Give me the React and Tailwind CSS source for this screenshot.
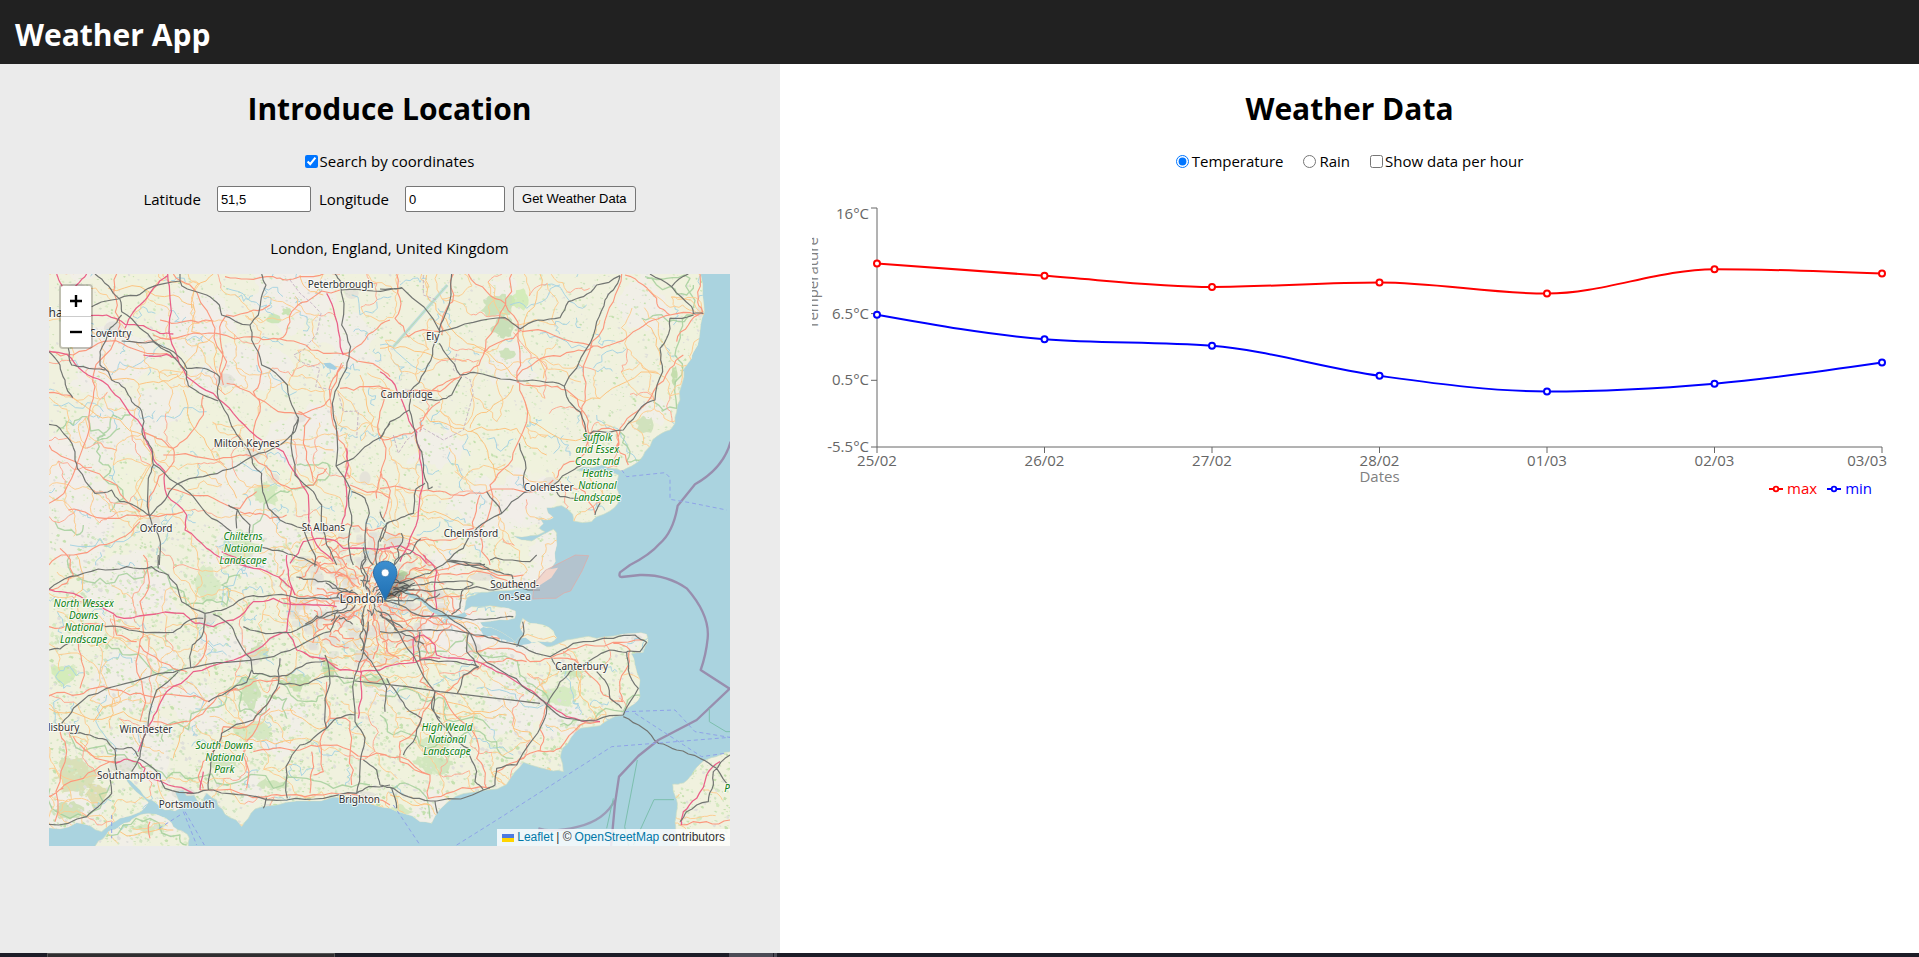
import { useEffect, useMemo, useRef, useState } from "react";

/* ------------------------------------------------------------------ */
/* Map geometry. Four sheets, each with its own local coordinates.     */
/* ------------------------------------------------------------------ */

const SHEETS = { nw: [0, 0], ne: [1020, 0], sw: [0, 870], se: [1020, 870] };

function createRandom(seed) {
  let s = seed;
  return () => {
    s = (s * 1664525 + 1013904223) % 4294967296;
    return s / 4294967296;
  };
}

function parse(sheet, text) {
  const [ox, oy] = SHEETS[sheet];
  return text.split(" ").map((pair) => {
    const [x, y] = pair.split(",").map(Number);
    return [x + ox, y + oy];
  });
}

/* Subdivides a line and shifts the middle points so that it meanders. */
function roughen(points, amount, rand, depth = 2) {
  let out = points;
  for (let d = 0; d < depth; d++) {
    const next = [out[0]];
    for (let i = 1; i < out.length; i++) {
      const [x0, y0] = out[i - 1];
      const [x1, y1] = out[i];
      const len = Math.hypot(x1 - x0, y1 - y0);
      const k = (rand() - 0.5) * amount;
      if (len > 14) next.push([(x0 + x1) / 2 - (y1 - y0) * k, (y0 + y1) / 2 + (x1 - x0) * k]);
      next.push([x1, y1]);
    }
    out = next;
  }
  return out;
}

const toPath = (pts) => "M" + pts.map((p) => p[0].toFixed(0) + " " + p[1].toFixed(0)).join("L");

const ENGLAND = [
  ["nw", "-400,-400"],
  ["ne", "960,-400 960,0 962,27 968,90 974,140 962,180 958,215 940,262 935,280 912,312 905,360 900,405 890,440 885,475 870,495 845,505 818,524 795,560 780,585 755,603 725,618 712,612 665,600 610,606 590,616 640,622 690,618 716,630 706,655 718,690 714,715 690,738 650,755 635,770 580,768 578,748 545,722 520,728 500,728 505,745 520,758 500,765 478,760 490,776 478,790 495,800 450,812 400,812 425,825 455,828 490,808 520,793 530,805 530,840 526,890"],
  ["se", "526,20 500,50 480,78 455,102 395,106 340,108 305,112 285,120 262,128 256,150 252,172 215,182 175,168 150,150 130,128 95,118 50,92 90,128 125,140 150,168 180,185 215,196 245,196 262,182 252,170 275,155 330,152 385,160 406,168 404,190 360,194 300,202 310,215 350,225 385,245 405,262 420,245 432,238 420,215 428,190 450,205 490,210 520,228 530,248 515,262 470,258 500,275 520,272 560,255 600,248 650,250 700,243 765,235 800,238 803,262 790,292 755,296 765,330 780,375 780,425 765,445 735,465 725,482 690,492 660,512 600,520 575,545 548,580 541,605 550,650 520,648 480,638 430,622 405,650 380,688 320,705 250,716 205,740 178,765 155,805 120,800 70,775 30,760 0,755"],
  ["sw", "1010,752 960,738 880,727 800,738 740,742 690,752 645,762 625,790 605,815 588,795 555,778 534,752 530,735 500,715 488,745 472,738 462,720 440,722 430,705 405,712 420,745 440,755 405,768 375,765 350,745 322,732 300,705 275,680 250,655 262,680 290,712 325,742 302,770 240,790 215,805 185,830 150,812 110,803 60,822 0,815 -400,815"],
].flatMap(([s, t]) => parse(s, t));

const WIGHT = parse("sw", "165,873 190,850 205,830 240,812 270,800 300,780 325,776 365,785 400,815 430,830 448,850 440,900 200,900");
const FRANCE = parse("se", "1080,590 1035,592 1020,600 970,618 935,660 910,684 878,688 884,720 892,745 885,800 892,850 905,910 1080,910");
const SHEPPEY_WATER = parse("se", "300,222 340,210 385,205 390,225 345,232 395,240 410,228 424,250 470,262 440,268 400,262 350,242 310,240");

const RAIL = [
  ["nw", "165,27 205,62 240,103 245,140 300,190 340,228 400,260 440,310 500,312 538,335 535,400 570,470 600,520 632,570 640,600 665,625 668,680 685,730 720,765 790,790 825,870 825,905"],
  ["nw", "155,125 215,105 290,92 325,70 420,48 425,62 500,90 538,120 545,150 630,180 635,225 665,300 742,360 750,405 775,460 755,510 765,630 820,680 845,720 860,840 890,900"],
  ["nw", "420,27 420,48"],
  ["nw", "665,27 678,60 662,110 655,150 630,180"],
  ["nw", "885,27 902,50 905,180 932,245 920,310 885,380 880,450 890,500 888,603 930,670 935,780 925,830 940,900"],
  ["nw", "888,603 940,580 975,545 1025,515 1050,475"],
  ["nw", "905,75 1000,78 1085,70"],
  ["nw", "245,150 210,190 180,260 180,300 205,320 215,345 255,370 275,410 300,430 312,470 308,510 335,550 340,600 325,640 328,750 355,810 358,900"],
  ["nw", "27,260 60,300 75,345 80,370 98,398"],
  ["nw", "85,250 95,300 130,305 195,315"],
  ["nw", "27,478 50,482 80,515 105,560 112,610 165,685 215,675 240,710 290,725 330,752"],
  ["nw", "330,752 375,705 410,658 490,635 570,612 635,575 720,540 765,500 775,455"],
  ["nw", "340,598 410,655 460,695 515,760 575,800"],
  ["nw", "245,228 340,230 390,262 440,320 445,362 490,390 535,408"],
  ["nw", "565,720 592,735 590,790"],
  ["nw", "592,733 630,780 632,830"],
  ["nw", "665,847 730,860 790,880 830,900"],
  ["nw", "935,680 975,700 988,745 975,810 985,880 1000,900"],
  ["nw", "1050,770 1030,790 1015,830 1010,900"],
  ["ne", "0,72 65,68 180,200 280,172 375,158 420,192 475,165 540,158 565,110 610,95 650,60 720,32"],
  ["ne", "215,27 195,150 178,205 158,250 135,320 90,380 88,435 105,500 125,560 135,640 145,672 158,665"],
  ["ne", "88,435 30,470 0,520"],
  ["ne", "178,235 200,270 240,330 280,322 390,343 480,348 553,364 560,395 600,440 615,480 618,515"],
  ["ne", "245,335 215,390 180,405 130,402"],
  ["ne", "553,364 620,250 650,170 675,105 700,75 720,32"],
  ["ne", "810,27 875,65 935,125 940,145 970,145"],
  ["ne", "925,27 875,65"],
  ["ne", "940,150 870,160 860,220 840,250 848,320 825,405 785,425 730,495 640,498 615,520"],
  ["ne", "605,600 580,615 520,660 432,683 365,745 290,790 265,820 250,850 200,890"],
  ["ne", "418,535 438,610 430,670"],
  ["ne", "320,680 365,745"],
  ["ne", "530,680 540,695 600,700"],
  ["ne", "660,715 645,750"],
  ["ne", "135,655 108,672 100,745 50,765 20,775 15,800 0,830"],
  ["ne", "0,740 15,770"],
  ["ne", "200,888 315,898"],
  ["sw", "27,103 90,65 175,42 260,35 335,35 385,60 410,90 425,140 495,175 560,160 640,122 700,120 800,130 895,128"],
  ["sw", "355,0 355,40"],
  ["sw", "27,285 60,282 90,262"],
  ["sw", "195,215 290,228 400,232 440,200 490,190"],
  ["sw", "495,175 485,245 457,270 452,340"],
  ["sw", "520,178 575,215 590,250 632,310 640,355 690,365 740,362 800,325 855,318"],
  ["sw", "610,215 700,235 770,225 830,190 895,165"],
  ["sw", "65,505 100,460 200,400 310,370 400,352 440,340 560,322 700,305 800,260 870,230 900,180"],
  ["sw", "415,350 350,405 325,500 310,550 300,605 275,650"],
  ["sw", "90,535 150,540 200,555 225,585 230,645"],
  ["sw", "295,610 350,650 375,700 460,715 520,705 620,720 740,735 850,730 950,715 985,695 1050,690"],
  ["sw", "225,580 275,578 295,605"],
  ["sw", "205,640 215,715 175,755 140,785 27,808"],
  ["sw", "505,440 560,412 620,382 635,345"],
  ["sw", "720,310 715,385 680,450 640,495 545,535 520,590 512,640 505,705"],
  ["sw", "715,385 780,392 830,372 940,370"],
  ["sw", "855,300 870,385 855,430 860,520 810,560 780,570 738,635 742,730"],
  ["sw", "860,520 890,490 945,480"],
  ["sw", "985,200 970,290 945,360 945,500 975,550 960,640 950,715"],
  ["sw", "970,290 1000,330 1040,400 1035,470"],
  ["sw", "970,615 1010,645 1020,690"],
  ["sw", "670,760 680,728"],
  ["se", "45,100 110,120 160,160 210,190 270,235 290,290 360,345 450,410 500,450 560,490 650,495 730,480 775,400 745,345 740,292 690,285 640,310 570,350 540,380 500,450"],
  ["se", "0,230 110,228 190,225 280,240 340,250 430,275 510,305 580,265 700,250 765,240 800,262 780,290 740,290"],
  ["se", "0,140 60,150 130,185 280,195 350,190 400,185"],
  ["se", "40,105 110,90 200,80 280,85"],
  ["se", "0,100 90,75 150,55 200,20 300,25 330,45"],
  ["se", "40,98 100,105 200,100 290,95 340,105 480,105"],
  ["se", "330,15 345,8 450,20 470,0"],
  ["se", "200,15 300,40 350,50 395,60 400,90"],
  ["se", "280,88 245,110 240,160 215,178"],
  ["se", "0,180 60,240 110,320 165,410 155,460 180,490"],
  ["se", "265,235 260,290 295,340"],
  ["se", "120,230 120,315 230,320 295,335 250,360 232,415"],
  ["se", "650,350 680,385 690,430 725,460"],
  ["se", "500,450 490,500 410,630 350,640 345,690 310,705 170,738 100,730 40,700 0,690"],
  ["se", "165,410 160,460 180,500 215,545 265,580 290,650 285,680 310,705"],
  ["se", "20,370 60,430 100,475 125,490 100,560 70,600"],
  ["se", "35,700 50,760"],
  ["se", "730,485 790,520 835,565 890,585 960,610 1010,640 1050,700"],
  ["se", "1050,600 1000,650 1000,690 985,740 920,770 900,800"],
  ["se", "165,738 172,775"],
  ["se", "515,310 545,350"],
  ["se", "410,275 430,240 428,200"],
];

/* The line between Redhill and Ashford runs almost dead straight. */
const STRAIGHT_RAIL = toPath(parse("sw", "945,378 1100,395 1200,410 1350,428 1500,445"));

const MOTORWAY = [
  ["nw", "50,27 65,60 90,95"],
  ["nw", "140,27 110,60 80,110"],
  ["nw", "385,30 340,70 300,120 265,165 255,190"],
  ["nw", "150,152 200,150 255,178 310,182 360,205 400,207"],
  ["nw", "383,27 390,100 388,180 405,255 440,335 520,385 580,445 650,515 730,560 770,630 805,690 808,780 830,840 880,890"],
  ["nw", "27,258 80,268 130,320 190,350 240,400 310,490 335,560 345,590 375,620 380,690 440,750 435,795 500,850 545,880 620,905"],
  ["nw", "860,85 880,130 900,220 910,270"],
  ["nw", "310,270 380,268 410,280"],
  ["nw", "920,550 925,600 915,650 920,720 905,780"],
  ["nw", "750,895 790,830 830,820 880,825 910,850 1050,850"],
  ["ne", "0,320 45,360 75,430 110,500 120,560 128,640 115,740 90,820 60,890"],
  ["ne", "0,852 60,842 95,858 140,895"],
  ["sw", "27,103 100,115 180,150 230,185 320,180 430,175 465,205 520,215 580,195 640,140 700,130 820,150 890,155"],
  ["sw", "545,-10 620,35 700,60 755,100 750,160 740,230 770,285 810,305 855,310 900,345 960,350 1020,345 1100,325 1200,310"],
  ["sw", "740,230 690,250 640,290 560,320 460,350 380,410 350,470 320,520 295,590"],
  ["sw", "225,625 260,612 300,625 315,640 310,665 385,690 460,715 440,715"],
  ["sw", "480,705 490,650"],
  ["sw", "740,0 745,60 765,120"],
  ["sw", "965,350 965,430 955,490"],
  ["se", "130,0 170,50 165,110 170,160 150,190"],
  ["se", "100,250 130,240 165,270 170,300 240,310 290,320 350,350 440,400 500,445 560,485 660,500"],
  ["se", "100,320 100,250"],
  ["se", "1020,620 980,660 950,730 910,770 905,810"],
];

const A_ROAD = [
  ["nw", "230,27 228,100 240,180 225,225 160,330 160,400 140,520 95,640 27,715"],
  ["nw", "27,260 100,270 175,235 245,235 320,265 400,275"],
  ["nw", "27,383 80,390 100,400"],
  ["nw", "400,27 450,60 515,165 525,190 560,290 550,360"],
  ["nw", "360,165 430,170 520,168"],
  ["nw", "340,210 440,210 530,205 640,215 700,220 780,235 850,265 930,275 1020,310 1050,335"],
  ["nw", "555,35 620,42 700,35 740,45 820,35 900,27"],
  ["nw", "690,120 640,135 560,150 540,200 545,290 540,345"],
  ["nw", "900,75 800,110 755,140 740,200 710,225"],
  ["nw", "560,355 600,370 700,430 770,445 830,430 870,400 880,340 905,295"],
  ["nw", "490,390 490,450 440,520 400,550 395,600 340,680 325,750"],
  ["nw", "27,540 80,580 160,620 230,660 300,740"],
  ["nw", "85,735 150,750 240,760 330,750 430,740"],
  ["nw", "27,900 80,870 160,850 240,820 300,770"],
  ["nw", "380,670 450,690 520,700 600,730 650,680"],
  ["nw", "310,500 350,520 400,550"],
  ["nw", "370,570 500,580 600,570 640,575 700,640 750,670 820,660 860,610"],
  ["nw", "660,240 665,320 640,380 660,440 640,560"],
  ["nw", "900,370 980,365 1050,372"],
  ["nw", "775,440 810,460 800,560 820,650"],
  ["nw", "910,300 870,400 880,480 920,560 930,640"],
  ["nw", "600,740 660,745 690,760 740,750"],
  ["nw", "930,660 1000,680 1050,700"],
  ["nw", "1050,165 1000,200 950,245 905,265"],
  ["nw", "1025,370 1020,440 1025,520 1020,640 1010,700"],
  ["ne", "50,27 60,100 45,160 85,215 180,200"],
  ["ne", "220,27 218,110 190,150 185,210"],
  ["ne", "265,27 320,80 375,115 415,195 420,260 410,340 435,410 415,530 385,600 330,660 300,790"],
  ["ne", "395,27 395,80 370,130 345,185 310,270 270,320 200,350 150,380 90,380"],
  ["ne", "425,195 400,220 310,265"],
  ["ne", "425,200 520,210 640,243 690,240 760,200 820,165 870,150 950,150 970,145"],
  ["ne", "725,27 700,110 670,190 620,280 615,380 605,440 625,510"],
  ["ne", "410,345 440,310 500,275 580,260 640,243"],
  ["ne", "410,350 500,360 560,375 610,440 625,500 620,560 550,600 530,640"],
  ["ne", "735,30 790,60 830,100 840,130 870,150"],
  ["ne", "960,27 955,100 968,140 925,180 890,230"],
  ["ne", "910,270 870,310 820,380 770,440 720,490 710,545"],
  ["ne", "620,505 680,490 710,500 712,550 745,600"],
  ["ne", "0,670 90,675 160,680 230,690 310,685 430,680 520,645"],
  ["ne", "580,670 615,680 645,745"],
  ["ne", "130,480 50,515 0,520"],
  ["ne", "120,500 135,450 180,410"],
  ["ne", "80,380 130,375 180,380 240,335"],
  ["ne", "100,820 180,825 240,810 280,790 290,720 300,690"],
  ["ne", "290,800 305,860 330,900"],
  ["ne", "0,620 20,650 10,760"],
  ["sw", "27,105 80,85 100,60 60,-20"],
  ["sw", "310,0 325,60 300,140 310,230 300,260 305,380 300,500"],
  ["sw", "27,422 120,418 160,400 270,420 310,420 450,425 510,440"],
  ["sw", "220,180 230,240 290,260"],
  ["sw", "27,215 100,215 200,215 300,220"],
  ["sw", "120,245 125,320 120,400"],
  ["sw", "300,270 360,320 415,345 440,350"],
  ["sw", "495,190 500,260 460,340"],
  ["sw", "560,420 610,400 640,380 720,375"],
  ["sw", "340,500 430,500 500,460 590,400"],
  ["sw", "60,505 75,560 60,680 45,800"],
  ["sw", "60,705 130,670 200,625 240,620"],
  ["sw", "100,545 150,595 230,625"],
  ["sw", "27,725 50,712 70,700"],
  ["sw", "490,700 480,650 510,600 545,545 550,515 640,500 720,395"],
  ["sw", "480,705 600,715 680,725 740,720 850,720 950,720 1050,750"],
  ["sw", "870,490 930,500 930,600 935,690"],
  ["sw", "640,590 700,580 780,585 850,570 930,585 1040,600"],
  ["sw", "690,460 650,520 610,600 620,700"],
  ["sw", "815,590 815,650 810,715"],
  ["sw", "860,380 870,490 840,560 850,650 820,660"],
  ["sw", "965,360 990,380 1030,370"],
  ["sw", "330,800 330,850"],
  ["se", "60,80 140,70 230,60 300,50 400,90 430,100"],
  ["se", "100,40 180,45 280,30 330,50 430,60"],
  ["se", "70,100 140,110 180,130 250,120"],
  ["se", "0,180 100,190 160,205 230,215 290,245 360,250"],
  ["se", "290,290 360,280 410,290 450,320 510,310 590,280 700,262 790,255"],
  ["se", "520,310 600,330 640,370 670,420 730,440"],
  ["se", "700,265 750,285 745,330 720,400 725,440"],
  ["se", "660,500 600,510 540,580 500,590 450,595 410,620 350,650"],
  ["se", "120,310 120,380 165,410 130,470 60,560 60,620"],
  ["se", "165,410 200,440 260,510 290,550 290,610 310,640 320,700"],
  ["se", "500,450 480,510 490,560 480,590"],
  ["se", "295,335 240,370 200,410"],
  ["se", "60,620 150,660 145,730 220,710 330,700"],
  ["se", "440,320 380,310 330,320 290,345"],
  ["se", "0,600 60,605 150,660"],
  ["se", "900,810 980,800 1050,795"],
];

const B_ROAD = [
  ["nw", "205,70 300,65 400,90 460,120 455,200 530,260 540,340"],
  ["nw", "175,320 260,340 340,350 400,340 450,280 520,210"],
  ["nw", "100,400 170,450 240,465 310,510 320,620 300,740"],
  ["nw", "455,130 470,60 520,27"],
  ["nw", "960,330 980,420 1000,500"],
  ["nw", "430,375 450,470 500,540 560,610 590,700"],
  ["nw", "780,30 800,70 850,90"],
  ["nw", "690,540 790,540 880,555"],
  ["ne", "140,30 140,90 180,150 230,210 300,250 350,290 410,340"],
  ["ne", "0,250 60,245 120,260 180,285 260,290"],
  ["ne", "480,27 470,100 430,190 450,260 490,340"],
  ["ne", "570,390 660,400 740,350 835,325"],
  ["ne", "790,165 830,220 840,300"],
  ["ne", "100,420 150,470 250,490 300,520 340,600 340,650"],
  ["ne", "270,500 340,495 410,490 440,540 500,570"],
  ["ne", "340,610 400,630 500,650"],
  ["ne", "120,730 180,745 250,780 290,790"],
  ["ne", "270,490 290,450 340,420 400,360"],
  ["ne", "435,410 450,470 520,510 610,520"],
  ["sw", "110,0 130,60 100,140 130,230"],
  ["sw", "320,340 260,400 220,430 210,520"],
  ["sw", "27,460 120,480 250,470 320,500"],
  ["sw", "440,380 500,440 450,500 420,540 400,610"],
  ["sw", "750,460 800,500 830,520 860,510"],
  ["sw", "545,545 600,545 650,560 760,555"],
  ["sw", "120,560 150,600 230,600"],
  ["sw", "230,400 240,440 160,500"],
  ["sw", "240,830 330,830 400,825"],
  ["se", "200,180 260,200 300,225 370,235"],
  ["se", "0,290 70,300 130,330 200,330"],
  ["se", "80,470 200,480 300,475 380,480"],
  ["se", "370,430 400,520 480,570"],
  ["se", "500,320 500,380 450,440"],
  ["se", "590,340 600,420 640,470 650,495"],
  ["se", "200,440 280,470 370,450"],
  ["se", "30,720 80,740 150,750"],
];

const RIVERS = [
  ["nw", "215,330 240,290 290,300 340,270 380,250"],
  ["nw", "560,70 620,100 680,120 700,150"],
  ["nw", "40,420 130,430 190,440"],
  ["nw", "350,470 420,450 500,440"],
  ["nw", "650,300 700,340 770,380"],
  ["nw", "430,690 400,750 380,820 350,870"],
  ["nw", "935,90 960,150 1010,110"],
  ["nw", "90,840 180,820 250,830 300,800"],
  ["nw", "600,590 680,600 720,630"],
  ["ne", "0,240 60,270 150,300"],
  ["ne", "390,120 440,130 500,100 540,60"],
  ["ne", "480,205 540,220 620,250"],
  ["ne", "640,310 680,260 740,250"],
  ["ne", "210,560 240,620 250,680"],
  ["ne", "60,60 100,40 140,40"],
  ["ne", "650,450 680,490 720,500 740,560 770,590"],
  ["ne", "180,770 140,800 110,810"],
  ["ne", "490,60 570,110 620,120"],
  ["sw", "60,430 45,500 60,520"],
  ["sw", "200,420 180,480 200,550 230,590"],
  ["sw", "300,520 310,570 280,600"],
  ["sw", "495,210 520,280 500,300 560,300"],
  ["sw", "545,150 590,60 640,40"],
  ["sw", "740,170 780,215 810,210 830,270"],
  ["sw", "820,560 850,600 900,590"],
  ["se", "290,400 380,410 420,440 490,450"],
  ["se", "230,520 300,550 330,580 400,600"],
  ["se", "280,320 240,370 160,390"],
  ["se", "560,340 580,420 600,460"],
];

const PARK_LINES = [
  ["nw", "50,500 80,470 100,480 140,455 195,510 170,560 205,600 190,640 250,700 210,740"],
  ["nw", "240,490 200,520 160,540"],
  ["nw", "270,450 220,450 200,500 170,520"],
  ["nw", "770,600 820,600 870,610 820,660 760,670 690,700 640,780 580,820"],
  ["nw", "45,770 110,810 130,780"],
  ["ne", "795,35 870,65 920,90 940,60"],
  ["ne", "785,160 830,150 880,165 940,150 900,200 885,270 905,330 890,430 820,410"],
  ["ne", "800,40 860,40 930,40 940,130"],
  ["ne", "720,500 750,560 740,590 790,580"],
  ["sw", "90,0 110,60 180,70 260,55 350,35 440,150 500,135 560,150 545,90 600,60"],
  ["sw", "200,265 270,300 340,350 420,350"],
  ["sw", "90,540 150,580 230,600 300,640 380,670 460,670 560,690 700,700 800,670 880,700 990,690"],
  ["sw", "370,560 360,520 500,460 560,430 600,380 640,370 720,380 800,440 850,420"],
  ["sw", "590,400 600,470 660,480 690,420 740,430 740,490"],
  ["sw", "850,340 940,380 1010,370"],
  ["sw", "200,840 250,810 330,790 420,840 440,870"],
  ["sw", "30,700 90,790 180,760 210,690"],
  ["se", "100,300 200,290 260,240 300,300 420,360 470,400 500,460"],
  ["se", "0,480 40,540 120,570 210,560 300,530 350,560 400,610"],
  ["se", "0,420 80,400 140,440 190,430 220,500 330,520"],
  ["se", "540,510 580,495 640,500 730,470 780,420"],
  ["se", "30,700 90,690 150,790"],
];

const WOODS = [
  [1375, 120, 56, 40, "#c4dfb0"], [1445, 105, 26, 34, "#cdebb0"], [1390, 190, 40, 32, "#bfdbae"],
  [1400, 268, 26, 22, "#c6deb0"], [1815, 480, 30, 30, "#c9dfb4"], [1905, 330, 12, 30, "#b9d8a0"],
  [72, 1232, 46, 42, "#cdebb0"], [110, 1540, 75, 60, "#d3dcae"], [170, 1590, 40, 40, "#dad9a6"],
  [90, 1640, 50, 30, "#c9dcae"], [655, 1160, 36, 28, "#c9ddb0"], [630, 1285, 36, 60, "#c6e0b2"],
  [770, 1245, 60, 26, "#bfdea8"], [865, 1215, 26, 34, "#b9d8a0"], [640, 1400, 70, 30, "#cfe6ba"],
  [680, 690, 40, 40, "#cde6b8"], [600, 850, 60, 50, "#cfe8bb"], [500, 960, 40, 60, "#d3e9c0"],
  [700, 160, 26, 20, "#c3e3ad"], [740, 140, 16, 12, "#bfe0a8"], [1010, 1250, 40, 20, "#c3dfac"],
  [1560, 1290, 60, 34, "#d0e8bc"], [1600, 1220, 40, 20, "#c6e2b2"], [1180, 1440, 50, 24, "#cfe6ba"],
  [1180, 1500, 70, 30, "#cbe4b6"], [550, 1500, 60, 26, "#cbe4b6"], [700, 1560, 60, 16, "#c9e2b4"],
  [1080, 930, 22, 14, "#bfe0a8"], [1080, 1640, 40, 20, "#cfe6ba"], [330, 1690, 60, 16, "#cfe6ba"],
];

const TOWNS = [
  [110, 90, 60, 50], [220, 190, 40, 30], [555, 345, 40, 28], [640, 565, 34, 30], [340, 770, 30, 26],
  [780, 460, 26, 18], [700, 640, 26, 22], [935, 85, 30, 24], [1100, 385, 26, 20], [1300, 800, 24, 16],
  [1530, 650, 30, 20], [1640, 520, 28, 20], [1980, 140, 14, 26], [1440, 190, 16, 14], [500, 1060, 44, 24],
  [245, 1500, 52, 34], [430, 1585, 50, 26], [965, 1590, 60, 16], [1300, 1150, 34, 24], [1330, 935, 60, 18],
  [1755, 1340, 18, 14], [1790, 1120, 24, 14], [1510, 1310, 24, 20], [640, 1180, 30, 30], [990, 870, 40, 30],
  [320, 1380, 16, 20], [850, 790, 40, 26], [975, 640, 24, 30],
];

const LABELS = [
  ["Peterborough", 902, 69], ["Coventry", 211, 217], ["Ely", 1178, 225], ["Cambridge", 1100, 398],
  ["Milton Keynes", 620, 545], ["Oxford", 348, 801], ["St Albans", 850, 799], ["Colchester", 1526, 678],
  ["Chelmsford", 1293, 816], ["Southend-", 1424, 969], ["on-Sea", 1424, 1006], ["Canterbury", 1625, 1214],
  ["Winchester", 318, 1403], ["Southampton", 268, 1542], ["Portsmouth", 440, 1630], ["Brighton", 958, 1613],
  ["lisbury", 71, 1398],
];

const PARK_LABELS = [
  [1672, 528, ["Suffolk", "and Essex", "Coast and", "Heaths", "National", "Landscape"]],
  [609, 826, ["Chilterns", "National", "Landscape"]],
  [131, 1026, ["North Wessex", "Downs", "National", "Landscape"]],
  [553, 1453, ["South Downs", "National", "Park"]],
  [1221, 1398, ["High Weald", "National", "Landscape"]],
];

function buildTerrain() {
  const rand = createRandom(51);
  const lines = (list, amount) =>
    list.map(([s, t]) => toPath(roughen(parse(s, t), amount, rand))).join("");

  const specks = ["", "", "", "", ""];
  for (let i = 0; i < 15000; i++) {
    const x = 27 + rand() * 2043;
    const y = 27 + rand() * 1716;
    const southern = y > 1150 || (x < 800 && y > 800);
    if (!southern && rand() < 0.45) continue;
    const r = 1 + rand() * (southern ? 6 : 4);
    const pick = Math.floor(rand() * 5);
    specks[pick] += `M${x.toFixed(0)} ${y.toFixed(0)}l${(r * rand() + 2).toFixed(0)} ${(-r * rand()).toFixed(0)}l${r.toFixed(0)} ${(r * rand()).toFixed(0)}l${(-r / 2).toFixed(0)} ${r.toFixed(0)}l${(-r).toFixed(0)} ${(-r / 3).toFixed(0)}z`;
  }

  const blobs = [];
  for (let i = 0; i < 130; i++) {
    const cx = rand() * 2070;
    const cy = rand() * 1740;
    const size = 40 + rand() * 80;
    const ring = Array.from({ length: 12 }, (_, k) => {
      const a = (k / 12) * Math.PI * 2;
      const d = size * (0.55 + rand() * 0.6);
      return [cx + Math.cos(a) * d * 1.2, cy + Math.sin(a) * d];
    });
    blobs.push(toPath(roughen([...ring, ring[0]], 0.6, rand)) + "z");
  }

  const step = 76;
  const nodes = [];
  for (let j = 0; j < 24; j++) {
    nodes.push(Array.from({ length: 28 }, (_, i) => [i * step + (rand() - 0.5) * 60, j * step + (rand() - 0.5) * 60]));
  }
  let yellow = "";
  let salmon = "";
  let stream = "";
  for (let j = 0; j < 23; j++) {
    for (let i = 0; i < 27; i++) {
      const targets = [nodes[j][i + 1], nodes[j + 1][i], nodes[j + 1][i + 1]];
      targets.forEach((t, k) => {
        const roll = rand();
        if (k === 2 && roll > 0.25) return;
        const d = toPath(roughen([nodes[j][i], t], 0.45, rand, 3));
        if (roll < 0.3) yellow += d;
        else if (roll < 0.4) salmon += d;
        else if (roll > 0.84) stream += toPath(roughen([nodes[j][i], [(nodes[j][i][0] + t[0]) / 2 + 12, (nodes[j][i][1] + t[1]) / 2]], 1, rand, 3));
      });
    }
  }

  /* Streets that radiate from the capital, with ring roads across them. */
  const centre = [985, 1000];
  let cityYellow = "";
  let citySalmon = "";
  let cityRail = "";
  for (let i = 0; i < 36; i++) {
    const a = (i / 36) * Math.PI * 2 + rand() * 0.12;
    const from = 12 + rand() * 40;
    const to = 110 + rand() * 120;
    const bend = (rand() - 0.5) * 0.7;
    const pts = [from, (from + to) / 2, to].map((d, k) => [
      centre[0] + Math.cos(a + bend * k * 0.5) * d * 1.15,
      centre[1] + Math.sin(a + bend * k * 0.5) * d,
    ]);
    const d = toPath(roughen(pts, 0.4, rand, 3));
    if (i % 5 < 2) cityRail += d;
    else citySalmon += d;
  }
  for (let ring = 1; ring < 10; ring++) {
    for (let seg = 0; seg < 16; seg++) {
      if (rand() < 0.2) continue;
      const a0 = (seg / 16) * Math.PI * 2 + ring;
      const pts = [0, 0.2, 0.42].map((da) => {
        const d = ring * 24 + (rand() - 0.5) * 30;
        return [centre[0] + Math.cos(a0 + da) * d * 1.2, centre[1] + Math.sin(a0 + da) * d];
      });
      const d = toPath(roughen(pts, 0.5, rand, 2));
      if (rand() < 0.6) cityYellow += d;
      else if (rand() < 0.6 || ring > 4) citySalmon += d;
      else cityRail += d;
    }
  }

  const cityBlocks = Array.from({ length: 170 }, () => {
    const a = rand() * Math.PI * 2;
    const d = Math.sqrt(rand()) * 210;
    return [centre[0] + Math.cos(a) * d * 1.15, centre[1] + Math.sin(a) * d, 6 + rand() * 14];
  });

  return {
    land: toPath(roughen(ENGLAND, 0.2, rand, 1)) + "z",
    wight: toPath(roughen(WIGHT, 0.3, rand)) + "z",
    france: toPath(roughen(FRANCE, 0.12, rand)) + "z",
    water: toPath(roughen(SHEPPEY_WATER, 0.6, rand)) + "z",
    rail: lines(RAIL, 0.16),
    motorway: lines(MOTORWAY, 0.16),
    aRoad: lines(A_ROAD, 0.3),
    bRoad: lines(B_ROAD, 0.36),
    rivers: lines(RIVERS, 0.7),
    park: lines(PARK_LINES, 0.6),
    woods: WOODS.map(([x, y, rx, ry, fill]) => {
      const ring = Array.from({ length: 14 }, (_, k) => {
        const a = (k / 14) * Math.PI * 2;
        const d = 0.6 + rand() * 0.5;
        return [x + Math.cos(a) * rx * d, y + Math.sin(a) * ry * d];
      });
      return [toPath(roughen([...ring, ring[0]], 0.8, rand)) + "z", fill];
    }),
    specks, blobs, yellow, salmon, stream, cityYellow, citySalmon, cityRail, cityBlocks,
  };
}

const SPECK_FILLS = ["#d3e8bf", "#c4e0ae", "#dcebc8", "#cfe3c0", "#dfdfda"];

function RegionMap() {
  const t = useMemo(buildTerrain, []);
  return (
    <svg
      viewBox="27 27 2043 1716"
      preserveAspectRatio="xMidYMid slice"
      className="block h-full w-full"
      role="img"
      aria-label="Map of London and the south east of England"
      fill="none"
      strokeLinejoin="round"
    >
      <defs>
        <clipPath id="land-clip">
          <path d={t.land} />
          <path d={t.wight} />
          <path d={t.france} />
        </clipPath>
        <linearGradient id="pin-fill" x1="0" y1="0" x2="0" y2="1">
          <stop offset="0" stopColor="#3d8fd0" />
          <stop offset="1" stopColor="#1f6fb2" />
        </linearGradient>
        <linearGradient id="pin-shadow" x1="0" y1="1" x2="1" y2="0">
          <stop offset="0" stopColor="#000" stopOpacity="0.45" />
          <stop offset="1" stopColor="#000" stopOpacity="0" />
        </linearGradient>
      </defs>
      <rect x="0" y="0" width="2100" height="1800" fill="#aad3df" />
      <g fill="#f0f1de" stroke="#c9dcc4" strokeWidth="2">
        <path d={t.land} />
        <path d={t.wight} />
        <path d={t.france} />
      </g>
      <g clipPath="url(#land-clip)">
        {t.blobs.map((d, i) => (
          <path key={i} d={d} fill={i % 2 ? "#f1eee9" : "#f0f2dc"} fillOpacity="0.75" />
        ))}
        {t.woods.map(([d, fill], i) => (
          <path key={i} d={d} fill={fill} fillOpacity="0.8" />
        ))}
        {t.specks.map((d, i) => (
          <path key={i} d={d} fill={SPECK_FILLS[i]} />
        ))}
        {TOWNS.map(([x, y, rx, ry], i) => (
          <ellipse key={i} cx={x} cy={y} rx={rx * 0.7} ry={ry * 0.7} fill="#dddbd6" fillOpacity="0.6" />
        ))}
        {t.cityBlocks.map(([x, y, r], i) => (
          <rect key={i} x={x - r} y={y - r} width={r * 2} height={r * 1.6} rx="6" fill="#dedbd6" fillOpacity="0.5" />
        ))}
        <path d={t.stream + t.rivers} stroke="#a9d4e2" strokeWidth="3" />
        <path d={t.park} stroke="#a5cf9b" strokeWidth="4" strokeOpacity="0.85" />
        <path d={t.yellow} stroke="#fccd92" strokeWidth="3" />
        <path d={t.bRoad + t.cityYellow} stroke="#fcc480" strokeWidth="3" />
        <path d={t.salmon} stroke="#fcac95" strokeWidth="3" />
        <path d={t.aRoad + t.citySalmon} stroke="#fb987e" strokeWidth="3.4" />
        <path d={t.motorway} stroke="#ea6088" strokeWidth="3.8" />
        <path d={t.water} fill="#aad3df" />
        <path d="M850 295l20 -2l10 6l12 10l-8 6l-22 -6z" fill="#a3cfe2" />
        <path d="M1060 245L1222 60" stroke="#aad3df" strokeWidth="9" strokeOpacity="0.7" />
        <path d="M1060 245L1222 60" stroke="#b9dcae" strokeWidth="3" />
        <g stroke="#c2adc2" strokeWidth="2.5" strokeDasharray="10 5">
          <path d="M750 45l30 40l35 30l28 30l-12 60l-40 50l-30 15l18 20l60 20l-12 55l50 10" />
          <path d="M895 385l15 55l45 -2l-5 80" />
          <path d="M1060 510l15 55l25 -40l50 -35l60 35l60 -30l30 -110l-10 -40l-50 -30l10 -50" />
          <path d="M1150 30l0 60l40 15" />
        </g>
      </g>
      <path d={t.rail + t.cityRail + STRAIGHT_RAIL} stroke="#727572" strokeWidth="3.600" />
      <path d="M1478 1002l4 -46l34 -40l90 -46l40 2l-20 46l-34 60l-20 6l-24 16l-30 0z" fill="#b9b6c0" fillOpacity="0.55" stroke="#e5a8a2" strokeWidth="2" />
      <path d="M1484 958l36 -44l34 -6l-20 30l-46 30z" fill="#f2d6cc" />
      <g stroke="#988eae" strokeWidth="7">
        <path d="M2072 530Q2050 610 1965 658L1913 722Q1900 800 1860 835Q1830 870 1770 900L1740 922Q1735 936 1745 936L1800 930Q1880 928 1940 970Q2010 1050 2003 1120Q1998 1170 1982 1215L2070 1272" />
        <path d="M2070 1270l-100 95l-115 60l-60 48l-58 62l-12 80l-12 130" />
        <path d="M1725 1605q-30 60 -110 80t-120 5" strokeOpacity="0.8" />
      </g>
      <g stroke="#8fa3e8" strokeWidth="3" strokeDasharray="12 9">
        <path d="M1745 615l15 20l115 -12l15 15l0 65l60 10l110 22" />
        <path d="M1250 1740l120 -75l345 -220l130 -10l225 -18" />
        <path d="M1755 1340l150 -5l60 65l110 18" />
        <path d="M1785 1345l200 130l70 -10" />
        <path d="M1060 1620l80 120M430 1640l40 100M435 1640l58 100M420 1650l-70 45M215 1650l0 70" />
      </g>
      <g stroke="#7cbfae" strokeWidth="3">
        <path d="M1792 1485l-38 200l12 60M1700 1690l20 -90M2008 1330l0 40l50 30l20 0M1780 1740l62 -136l60 0" />
      </g>

      <g fontFamily="'Noto Sans', 'Open Sans', sans-serif" textAnchor="middle" stroke="#fff" strokeOpacity="0.75" strokeWidth="6" style={{ paintOrder: "stroke" }}>
        <g fontSize="30" fill="#333">
          {LABELS.map(([name, x, y]) => (
            <text key={name} x={x} y={y}>{name}</text>
          ))}
        </g>
        <text x="47" y="155" fontSize="36" fill="#333">ha</text>
        <text x="965" y="1015" fontSize="37" fill="#333">London</text>
        <g fontSize="30" fontStyle="italic" fill="#0c8212">
          {PARK_LABELS.map(([x, y, words]) =>
            words.map((word, i) => (
              <text key={word + x} x={x} y={y + i * 36}>{word}</text>
            )),
          )}
          <text x="2070" y="1582">Pa</text>
        </g>
      </g>

      <path d="M1036 1004l20 -60q20 -30 60 -25q20 10 0 40q-30 40 -80 45z" fill="url(#pin-shadow)" />
      <g transform="translate(998 886) scale(3)">
        <path
          d="M12.5 0.8C6 0.8 0.8 6 0.8 12.5c0 2.6 0.9 5 2.2 7.4L12.5 40l9.5-20.1c1.300-2.400 2.200-4.800 2.200-7.400C24.200 6 19 0.800 12.500 0.800z"
          fill="url(#pin-fill)"
          stroke="#2a6ca5"
          strokeWidth="1"
        />
        <circle cx="12.500" cy="12.500" r="4" fill="#fff" stroke="#2a6ca5" strokeWidth="0.700" />
      </g>
    </svg>
  );
}

/* ------------------------------------------------------------------ */
/* Line chart                                                          */
/* ------------------------------------------------------------------ */

const DATES = ["25/02", "26/02", "27/02", "28/02", "01/03", "02/03", "03/03"];
const SERIES = [
  { name: "max", color: "#ff0000", values: [11, 9.9, 8.9, 9.3, 8.3, 10.5, 10.1] },
  { name: "min", color: "#0000ff", values: [6.4, 4.2, 3.6, 0.9, -0.5, 0.2, 2.1] },
];
const Y_TICKS = [16, 6.5, 0.5, -5.5];
const Y_MIN = -5.5;
const Y_MAX = 16;

/* Cubic interpolation that keeps the curve monotone between samples. */
function monotonePath(pts) {
  const n = pts.length;
  const slope = (i) => (pts[i + 1][1] - pts[i][1]) / (pts[i + 1][0] - pts[i][0]);
  const m = pts.map((_, i) => {
    if (i === 0 || i === n - 1) return 0;
    const a = slope(i - 1);
    const b = slope(i);
    const p = (a + b) / 2;
    return (Math.sign(a) + Math.sign(b)) * Math.min(Math.abs(a), Math.abs(b), 0.5 * Math.abs(p)) || 0;
  });
  m[0] = (3 * slope(0) - m[1]) / 2;
  m[n - 1] = (3 * slope(n - 2) - m[n - 2]) / 2;
  let d = `M${pts[0][0]},${pts[0][1]}`;
  for (let i = 1; i < n; i++) {
    const h = (pts[i][0] - pts[i - 1][0]) / 3;
    d += `C${pts[i - 1][0] + h},${pts[i - 1][1] + h * m[i - 1]},${pts[i][0] - h},${pts[i][1] - h * m[i]},${pts[i][0]},${pts[i][1]}`;
  }
  return d;
}

function TemperatureChart() {
  const box = useRef(null);
  const [width, setWidth] = useState(1075);
  useEffect(() => {
    const observer = new ResizeObserver(([entry]) => setWidth(Math.round(entry.contentRect.width)));
    observer.observe(box.current);
    return () => observer.disconnect();
  }, []);

  const left = 65;
  const right = width - 5;
  const top = 5;
  const bottom = 244;
  const x = (i) => left + ((right - left) * i) / (DATES.length - 1);
  const y = (v) => bottom - ((v - Y_MIN) / (Y_MAX - Y_MIN)) * (bottom - top);

  return (
    <div ref={box} className="w-full">
      <svg width={width} height="282" className="block overflow-hidden text-[15px]" fill="#666" role="img" aria-label="Maximum and minimum temperature by date">
        <g stroke="#666" strokeWidth="1">
          <path d={`M${left} ${top}V${bottom}H${right}`} fill="none" />
          {Y_TICKS.map((v) => (
            <path key={v} d={`M${left - 6} ${y(v)}H${left}`} />
          ))}
          {DATES.map((d, i) => (
            <path key={d} d={`M${x(i)} ${bottom}v6`} />
          ))}
        </g>
        {Y_TICKS.map((v) => (
          <text key={v} x={left - 8} y={v === Y_MAX ? 16 : y(v) + 5} textAnchor="end">{v}°C</text>
        ))}
        {DATES.map((d, i) => (
          <text key={d} x={i === DATES.length - 1 ? right + 5 : x(i)} y={bottom + 19} textAnchor={i === DATES.length - 1 ? "end" : "middle"}>
            {d}
          </text>
        ))}
        <text x={(left + right) / 2} y={bottom + 35} textAnchor="middle" fill="#808080">Dates</text>
        <text transform="translate(6 80) rotate(-90)" textAnchor="middle" fill="#808080">Temperature</text>
        {SERIES.map((s) => {
          const pts = s.values.map((v, i) => [x(i), y(v)]);
          return (
            <g key={s.name} stroke={s.color}>
              <path d={monotonePath(pts)} fill="none" strokeWidth="2" />
              {pts.map(([px, py], i) => (
                <circle key={i} cx={px} cy={py} r="3" fill="#fff" strokeWidth="2" />
              ))}
            </g>
          );
        })}
      </svg>
      <ul className="-mt-[5px] flex justify-end gap-[10px] pr-[15px] text-[15px] leading-4">
        {SERIES.map((s) => (
          <li key={s.name} className={s.name === "max" ? "flex items-center gap-1 text-[#ff0000]" : "flex items-center gap-1 text-[#0000ff]"}>
            <svg width="14" height="14" viewBox="0 0 14 14" fill="none" stroke="currentColor" strokeWidth="1.800" aria-hidden="true">
              <path d="M0 8h4.500M9.500 8h4.500" />
              <circle cx="7" cy="8" r="2.300" />
            </svg>
            {s.name}
          </li>
        ))}
      </ul>
    </div>
  );
}

/* ------------------------------------------------------------------ */
/* Page                                                                */
/* ------------------------------------------------------------------ */

export default function App() {
  return (
    <div className="flex min-h-screen flex-col bg-white font-['Open_Sans','Noto_Sans',sans-serif] text-[15px] text-black">
      <header className="flex h-16 items-center bg-[#212121] px-[15px]">
        <h1 className="pt-1.5 text-[30px] leading-10 font-bold text-white">Weather App</h1>
      </header>

      <main className="flex flex-1">
        <section className="flex w-[780px] shrink flex-col items-center bg-[#ebebeb] pt-[25px] pr-[50px] pb-8 pl-[49px]">
          <h2 className="text-[30px] leading-10 font-bold">Introduce Location</h2>

          <label className="mt-[22px] flex h-5 items-center gap-0.5">
            <input type="checkbox" defaultChecked className="size-[13px] accent-[#0075ff]" />
            Search by coordinates
          </label>

          <form className="mt-[15px] flex items-center" onSubmit={(e) => e.preventDefault()}>
            <label htmlFor="latitude" className="mr-4">Latitude</label>
            <input id="latitude" type="text" defaultValue="51,5" className="mr-2 h-[26px] w-[94px] rounded-[2px] border border-[#767676] bg-white px-[3px] font-['Liberation_Sans',sans-serif] text-[13px]" />
            <label htmlFor="longitude" className="mr-4">Longitude</label>
            <input id="longitude" type="text" defaultValue="0" className="mr-2 h-[26px] w-[100px] rounded-[2px] border border-[#767676] bg-white px-[3px] font-['Liberation_Sans',sans-serif] text-[13px]" />
            <button type="submit" className="h-[26px] rounded-[3px] border border-[#767676] bg-[#efefef] px-2 font-['Liberation_Sans',sans-serif] text-[13px]">
              Get Weather Data
            </button>
          </form>

          <p className="mt-6 leading-6">London, England, United Kingdom</p>

          <div className="relative mt-[14px] h-[572px] w-full overflow-hidden bg-[#aad3df]">
            <RegionMap />
            <div className="absolute top-[10px] left-[10px] flex flex-col rounded-[4px] border-2 border-black/20 bg-clip-padding">
              <button type="button" aria-label="Zoom in" className="flex size-[30px] items-center justify-center rounded-t-[2px] bg-white">
                <svg width="12" height="12" viewBox="0 0 12 12" stroke="#000" strokeWidth="2.400" aria-hidden="true"><path d="M0 6h12M6 0v12" /></svg>
              </button>
              <button type="button" aria-label="Zoom out" className="flex h-[31px] w-[30px] items-center justify-center rounded-b-[2px] border-t border-[#ccc] bg-white">
                <svg width="12" height="12" viewBox="0 0 12 12" stroke="#000" strokeWidth="2.400" aria-hidden="true"><path d="M0 6h12" /></svg>
              </button>
            </div>
            <div className="absolute right-0 bottom-0 flex h-[17px] items-center gap-[3px] bg-white/80 px-[5px] font-['Liberation_Sans',sans-serif] text-[12px] leading-[17px] text-[#333]">
              <a href="https://leafletjs.com" className="flex items-center gap-[3px] text-[#0078a8]">
                <svg width="12" height="8" viewBox="0 0 12 8" aria-hidden="true"><path fill="#4C7BE1" d="M0 0h12v4H0z" /><path fill="#FFD500" d="M0 4h12v4H0z" /></svg>
                Leaflet
              </a>
              <span>| ©</span>
              <a href="https://www.openstreetmap.org/copyright" className="text-[#0078a8]">OpenStreetMap</a>
              <span>contributors</span>
            </div>
          </div>
        </section>

        <section className="flex min-w-0 flex-1 flex-col items-center px-8 pt-[25px]">
          <h2 className="text-[30px] leading-10 font-bold">Weather Data</h2>
          <div className="mt-[22px] flex h-5 items-center gap-5">
            <label className="flex items-center gap-[3px]">
              <input type="radio" name="metric" defaultChecked className="size-[13px] accent-[#0075ff]" />
              Temperature
            </label>
            <label className="flex items-center gap-[3px]">
              <input type="radio" name="metric" className="size-[13px]" />
              Rain
            </label>
            <label className="flex items-center gap-0.5">
              <input type="checkbox" className="size-[13px]" />
              Show data per hour
            </label>
          </div>
          <div className="mt-8 w-full">
            <TemperatureChart />
          </div>
        </section>
      </main>

      <footer className="flex h-1 bg-[#1d1d27]" aria-hidden="true">
        <div className="ml-[47px] w-[288px] border-x border-t border-[#555] bg-[#302e30]" />
        <div className="ml-[394px] w-[44px] bg-[#4b4b55]" />
        <div className="ml-px w-[3px] bg-[#4b4b55]" />
      </footer>
    </div>
  );
}
